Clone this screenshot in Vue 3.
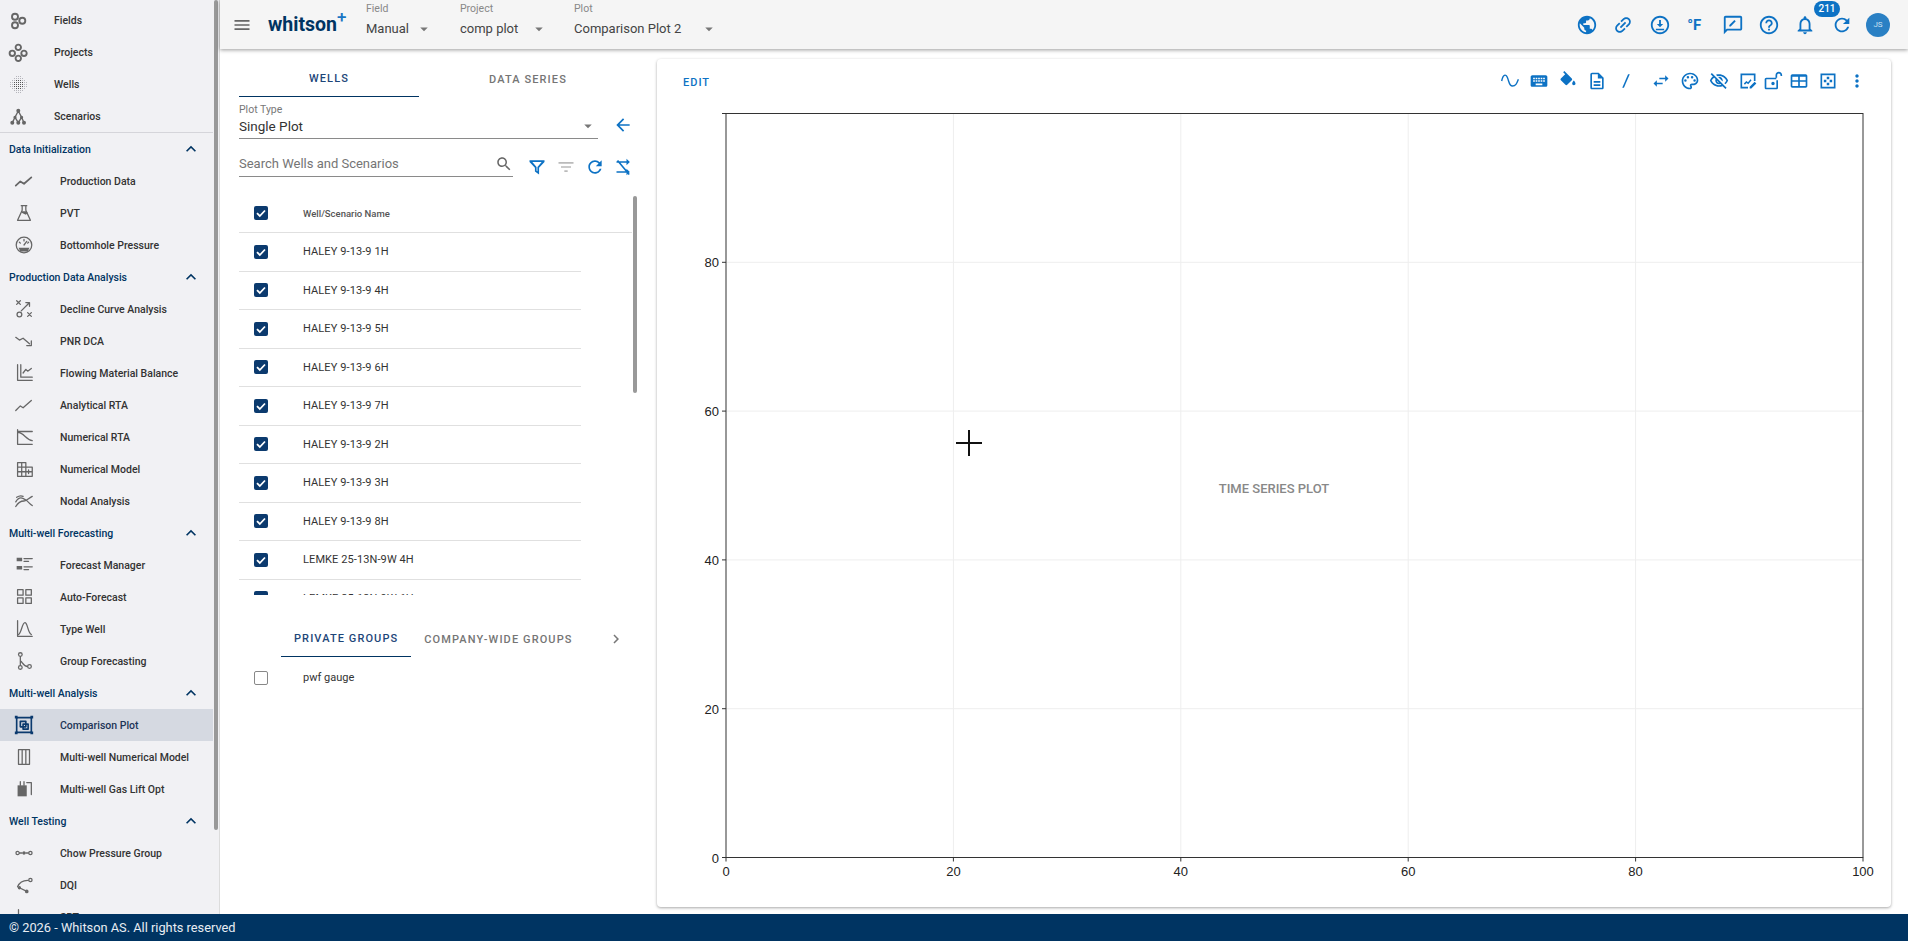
<script setup>
const c = (x, y, r) => `M${x - r} ${y}a${r} ${r} 0 1 0 ${2 * r} 0a${r} ${r} 0 1 0 ${-2 * r} 0`

// 1px squares on a 2px pitch, corners left out so the patch reads round
const dotGrid = (from, n, reach) => {
  const mid = (n - 1) / 2
  let d = ''
  for (let i = 0; i < n; i++) {
    for (let j = 0; j < n; j++) {
      if (Math.abs(i - mid) + Math.abs(j - mid) <= reach) d += `M${from + i * 2} ${from + j * 2}h1v1h-1z`
    }
  }
  return d
}

const navTop = [
  { label: 'Fields', d: c(9, 8.7, 3) + c(16.3, 12.7, 3) + c(9, 17.3, 3), bold: true },
  { label: 'Projects', d: c(12.3, 7.3, 2.7) + c(6.3, 13.3, 2.7) + c(18, 13.3, 2.7) + c(12.3, 18.3, 2.7), bold: true },
  { label: 'Wells', dots: dotGrid(4, 9, 5), core: dotGrid(8, 5, 3) },
  { label: 'Scenarios', d: 'M12.3 7L9 13.300L6.300 18.700M12.300 7L15.600 13.300L18 18.700M9 13.300L12.300 18.700M15.600 13.300L12.300 18.700', solid: c(12.3, 6.7, 2) + c(9, 13.3, 1.6) + c(15.6, 13.3, 1.6) + c(6.3, 18.7, 2) + c(12.3, 18.7, 2) + c(18, 18.7, 2) }
]

const sections = [
  {
    title: 'Data Initialization',
    items: [
      { label: 'Production Data', d: 'M3 17L8 12.500L12 15L20 8', bold: true },
      { label: 'PVT', d: 'M9 4h6M10 4v5L5 20h14L14 9V4', solid: 'M9 10h6l1 2-2 2-4-2z' },
      { label: 'Bottomhole Pressure', d: c(12, 12, 8.5) + 'M12 12l3-4M7 9l1 1M12 6v1.500M17 9l-1 1', solid: 'M6 15h12l-2 4H8z' }
    ]
  },
  {
    title: 'Production Data Analysis',
    items: [
      { label: 'Decline Curve Analysis', d: 'M4 3l4 4M8 3l-4 4M16 16l4 4M20 16l-4 4M9 14L17 6M14 5h4v4' + c(7, 18, 2.6) },
      { label: 'PNR DCA', d: 'M3 8L7 11L11 9L18 15M20 12v5h-5' },
      { label: 'Flowing Material Balance', d: 'M5 3v17h16M8.500 3v13.500H21M11 12l3-4l2 2l4-3' },
      { label: 'Analytical RTA', d: 'M3 18L8 13L11 15L20 7' },
      { label: 'Numerical RTA', d: 'M5 4v16h16M5 7c7 0 9 8 16 9M5 6h16' },
      { label: 'Numerical Model', d: 'M5 20V5h9v15zM5 10h9M5 15h9M9.500 5v15M14 10h7v10h-7M17 13v4M14 15h7' },
      { label: 'Nodal Analysis', d: 'M3 13c4-7 8-4 11-2s4 4 7 6M3 18c3-5 6-6 9-6s5-3 9-5M4 8c3-2 5-2 7-1' }
    ]
  },
  {
    title: 'Multi-well Forecasting',
    items: [
      { label: 'Forecast Manager', d: 'M12 5h9M12 8h5M12 14h9M12 17h5', solid: 'M4 4h6v4H4zM4 13h6v4H4z' },
      { label: 'Auto-Forecast', d: 'M5 4h6v6H5zM14 4h6v6h-6zM5 13h6v6H5zM14 13h6v6h-6z' },
      { label: 'Type Well', d: 'M5 3v17h16M6 18c3-1 4-13 7-13s3 11 7 13' },
      { label: 'Group Forecasting', d: c(8, 5, 2) + c(8, 19, 2) + c(18, 18, 2) + 'M8 7v10M8 12c2 0 3 6 8 6' }
    ]
  },
  {
    title: 'Multi-well Analysis',
    items: [
      { label: 'Comparison Plot', active: true, navy: true, d: 'M4 4h16v16H4zM8 8h6v6H8zM11 11h5.500v5.500H11z', solid: 'M2 2h3v3H2zM19 2h3v3h-3zM2 19h3v3H2zM19 19h3v3h-3z' },
      { label: 'Multi-well Numerical Model', d: 'M6 4h12v16H6zM10 4v16M14 4v16' },
      { label: 'Multi-well Gas Lift Opt', d: 'M8 8V4M12 8V4M15 5h5v13', solid: 'M5 8h10v12H5z' }
    ]
  },
  {
    title: 'Well Testing',
    items: [
      { label: 'Chow Pressure Group', d: c(5, 12, 1.8) + c(19, 12, 1.8) + 'M7 12h3M14 12h3', solid: c(12, 12, 1.8) },
      { label: 'DQI', d: 'M5 14c2-5 7-7 11-7' + c(19, 6.5, 1.8) + 'M7 15l8 4', solid: c(7, 15, 1.8) + c(15, 19, 2) },
      { label: 'SRT', d: 'M6 4v16h14' }
    ]
  }
]

const icons = {
  globe: 'M12 2C6.480 2 2 6.480 2 12s4.480 10 10 10 10-4.480 10-10S17.520 2 12 2zm-1 17.930c-3.950-.49-7-3.850-7-7.930 0-.62.08-1.210.21-1.790L9 15v1c0 1.100.9 2 2 2v1.930zm6.900-2.540c-.26-.81-1-1.390-1.900-1.390h-1v-3c0-.55-.45-1-1-1H8v-2h2c.55 0 1-.45 1-1V7h2c1.100 0 2-.9 2-2v-.41c2.930 1.190 5 4.060 5 7.410 0 2.080-.8 3.970-2.100 5.390z',
  link: 'M3.900 12c0-1.710 1.390-3.100 3.100-3.100h4V7H7c-2.760 0-5 2.240-5 5s2.240 5 5 5h4v-1.900H7c-1.710 0-3.100-1.390-3.100-3.100zM8 13h8v-2H8v2zm9-6h-4v1.900h4c1.710 0 3.100 1.390 3.100 3.100s-1.390 3.100-3.100 3.100h-4V17h4c2.760 0 5-2.240 5-5s-2.240-5-5-5z',
  download: 'M12 2C6.480 2 2 6.480 2 12s4.480 10 10 10 10-4.480 10-10S17.520 2 12 2zm0 18c-4.410 0-8-3.590-8-8s3.590-8 8-8 8 3.590 8 8-3.590 8-8 8zM11 6.500h2V11h2.500L12 14.500 8.500 11H11zM7.500 16h9v1.800h-9z',
  feedback: 'M20 2H4c-1.100 0-2 .9-2 2v18l4-4h14c1.100 0 2-.9 2-2V4c0-1.100-.9-2-2-2zm0 14H5.200L4 17.200V4h16v12zM8 13.500V12l5.500-5.500 1.500 1.500L9.500 13.500z',
  help: 'M11 18h2v-2h-2v2zm1-16C6.480 2 2 6.480 2 12s4.480 10 10 10 10-4.480 10-10S17.520 2 12 2zm0 18c-4.410 0-8-3.590-8-8s3.590-8 8-8 8 3.590 8 8-3.590 8-8 8zm0-14c-2.210 0-4 1.790-4 4h2c0-1.100.9-2 2-2s2 .9 2 2c0 2-3 1.750-3 5h2c0-2.250 3-2.500 3-5 0-2.210-1.790-4-4-4z',
  bell: 'M12 22c1.100 0 2-.9 2-2h-4c0 1.100.9 2 2 2zm6-6v-5c0-3.070-1.630-5.640-4.500-6.320V4c0-.83-.67-1.500-1.500-1.500s-1.500.67-1.500 1.500v.68C7.640 5.360 6 7.920 6 11v5l-2 2v1h16v-1l-2-2zm-2 1H8v-6c0-2.480 1.510-4.500 4-4.500s4 2.020 4 4.500v6z',
  refresh: 'M17.650 6.350C16.200 4.900 14.210 4 12 4c-4.420 0-7.990 3.580-7.990 8s3.570 8 7.990 8c3.730 0 6.840-2.550 7.730-6h-2.080c-.82 2.330-3.040 4-5.650 4-3.310 0-6-2.690-6-6s2.690-6 6-6c1.660 0 3.140.69 4.220 1.780L13 11h7V4l-2.350 2.350z',
  wave: 'M2 12c1.500-8 5-9 7-4s2 10 6 10s5-3 7-8',
  keyboard: 'M20 5H4c-1.100 0-1.990.9-1.990 2L2 17c0 1.100.9 2 2 2h16c1.100 0 2-.9 2-2V7c0-1.100-.9-2-2-2zm-9 3h2v2h-2V8zm0 3h2v2h-2v-2zM8 8h2v2H8V8zm0 3h2v2H8v-2zm-1 2H5v-2h2v2zm0-3H5V8h2v2zm9 7H8v-2h8v2zm0-4h-2v-2h2v2zm0-3h-2V8h2v2zm3 3h-2v-2h2v2zm0-3h-2V8h2v2z',
  fill: 'M16.560 8.940L7.620 0 6.210 1.410l2.380 2.380-5.150 5.150c-.59.59-.59 1.540 0 2.120l5.500 5.500c.29.29.68.44 1.060.44s.77-.15 1.060-.44l5.500-5.500c.59-.58.59-1.530 0-2.120zM19 11.500s-2 2.170-2 3.500c0 1.100.9 2 2 2s2-.9 2-2c0-1.330-2-3.500-2-3.500z',
  doc: 'M8 16h8v2H8zm0-4h8v2H8zm6-10H6c-1.100 0-2 .9-2 2v16c0 1.100.89 2 1.990 2H18c1.100 0 2-.9 2-2V8l-6-6zm4 18H6V4h7v5h5v11z',
  slash: 'M14.500 4h2L9.500 20h-2z',
  swap: 'M6.990 11L3 15l3.990 4v-3H14v-2H6.990v-3zM21 9l-3.990-4v3H10v2h7.010v3L21 9z',
  palette: 'M12 22C6.490 22 2 17.510 2 12S6.490 2 12 2s10 4.040 10 9c0 3.310-2.690 6-6 6h-1.770c-.28 0-.5.22-.5.5 0 .12.05.23.13.33.41.47.64 1.060.64 1.670 0 1.380-1.120 2.500-2.500 2.500zm0-18c-4.410 0-8 3.590-8 8s3.590 8 8 8c.28 0 .5-.22.5-.5 0-.16-.08-.28-.14-.35-.41-.46-.63-1.050-.63-1.650 0-1.380 1.120-2.500 2.500-2.500H16c2.210 0 4-1.790 4-4 0-3.860-3.590-7-8-7z' + c(6.5, 11.5, 1.5) + c(9.5, 7.5, 1.5) + c(14.5, 7.5, 1.5) + c(17.5, 11.5, 1.5),
  eyeOff: 'M12 6c3.790 0 7.170 2.130 8.820 5.500-.59 1.220-1.420 2.270-2.410 3.120l1.410 1.410c1.390-1.230 2.490-2.770 3.180-4.530C21.270 7.110 17 4 12 4c-1.270 0-2.490.2-3.640.57l1.650 1.650C10.660 6.090 11.320 6 12 6zm-1.070 1.140L13 9.210c.57.25 1.030.71 1.280 1.280l2.070 2.070c.08-.34.14-.7.14-1.070C16.500 9.010 14.480 7 12 7c-.37 0-.72.05-1.070.14zM2.010 3.870l2.680 2.680C3.060 7.830 1.770 9.530 1 11.500 2.730 15.890 7 19 12 19c1.520 0 2.980-.29 4.320-.82l3.420 3.420 1.410-1.410L3.420 2.450 2.010 3.870zm7.500 7.500l2.610 2.610c-.04.01-.08.02-.12.02-1.380 0-2.500-1.120-2.500-2.500 0-.05.01-.08.01-.13zm-3.400-3.400l1.750 1.750c-.23.55-.36 1.150-.36 1.780 0 2.480 2.020 4.500 4.500 4.500.63 0 1.230-.13 1.770-.36l.98.98c-.88.24-1.800.38-2.750.38-3.790 0-7.170-2.130-8.820-5.500.7-1.430 1.720-2.610 2.930-3.530z',
  sign: 'M3 3h18v9h-2V5H5v14h7v2H3zM7 15l3-3 2 1.500 3-3.500 1.300 1-4 5-2-1.500-2 2zM14 21v-2l6-6 2 2-6 6z',
  lock: 'M12 17c1.100 0 2-.9 2-2s-.9-2-2-2-2 .9-2 2 .9 2 2 2zM15 8V5c0-2.200 1.800-4 4-4s4 1.800 4 4v1h-2V5c0-1.100-.9-2-2-2s-2 .9-2 2v3zM4 8h12v2H4v10h12V11h2v9c0 1.100-.9 2-2 2H4c-1.100 0-2-.9-2-2V10c0-1.100.9-2 2-2z',
  table: 'M4 4h16c1.100 0 2 .9 2 2v12c0 1.100-.9 2-2 2H4c-1.100 0-2-.9-2-2V6c0-1.100.9-2 2-2zm0 3v4h7V7zm9 0v4h7V7zM4 13v5h7v-5zm9 0v5h7v-5z',
  dots: 'M3 3h18v18H3zm2 2v14h14V5zM10.500 7h3v3h-3zM10.500 14h3v3h-3zM7 10.500h3v3H7zM14 10.500h3v3h-3z',
  more: 'M12 8c1.100 0 2-.9 2-2s-.9-2-2-2-2 .9-2 2 .9 2 2 2zm0 2c-1.100 0-2 .9-2 2s.9 2 2 2 2-.9 2-2-.9-2-2-2zm0 6c-1.100 0-2 .9-2 2s.9 2 2 2 2-.9 2-2-.9-2-2-2z',
  menu: 'M3 18h18v-2H3v2zm0-5h18v-2H3v2zm0-7v2h18V6H3z',
  drop: 'M7 10l5 5 5-5z',
  back: 'M20 11H7.830l5.590-5.590L12 4l-8 8 8 8 1.410-1.410L7.830 13H20v-2z',
  search: 'M15.500 14h-.79l-.28-.27C15.410 12.590 16 11.110 16 9.500 16 5.910 13.090 3 9.500 3S3 5.910 3 9.500 5.910 16 9.500 16c1.610 0 3.090-.59 4.230-1.570l.27.28v.79l5 4.990L20.490 19l-4.990-5zm-6 0C7.010 14 5 11.990 5 9.500S7.010 5 9.500 5 14 7.010 14 9.500 11.990 14 9.500 14z',
  filter: 'M3 4h18v2l-6.500 6.800V21l-5-3.500v-4.700L3 6zm3.400 2l5.100 5.900v4.600l1 .7v-5.300L17.600 6z',
  filterList: 'M10 18h4v-2h-4v2zM3 6v2h18V6H3zm3 7h12v-2H6v2z',
  shuffle: 'M3 5h12V2l4 4-4 4V7H3zM3 17h12v-3l4 4-4 4v-3H3zM5 3.500l14 17-1.500 1.200-14-17z',
  less: 'M12 8l-6 6 1.410 1.410L12 10.830l4.590 4.580L18 14z',
  right: 'M10 6L8.590 7.410 13.170 12l-4.580 4.590L10 18l6-6z'
}

const topIcons = [
  { d: icons.globe },
  { d: icons.link, tilt: true },
  { d: icons.download },
  { text: '°F' },
  { d: icons.feedback },
  { d: icons.help },
  { d: icons.bell },
  { d: icons.refresh }
]

const plotTools = [
  { d: icons.wave, line: true }, { d: icons.keyboard }, { d: icons.fill }, { d: icons.doc },
  { d: icons.slash }, { d: icons.swap, gap: true }, { d: icons.palette }, { d: icons.eyeOff },
  { d: icons.sign }, { d: icons.lock, tight: true }, { d: icons.table }, { d: icons.dots }, { d: icons.more }
]

const pickers = [
  { label: 'Field', value: 'Manual', width: 94, inner: 67 },
  { label: 'Project', value: 'comp plot', width: 114, inner: 88 },
  { label: 'Plot', value: 'Comparison Plot 2', width: 150, inner: 144 }
]

const wells = ['HALEY 9-13-9 1H', 'HALEY 9-13-9 4H', 'HALEY 9-13-9 5H', 'HALEY 9-13-9 6H', 'HALEY 9-13-9 7H', 'HALEY 9-13-9 2H', 'HALEY 9-13-9 3H', 'HALEY 9-13-9 8H', 'LEMKE 25-13N-9W 4H', 'LEMKE 25-13N-9W 6H']

// chart scale, in px inside the svg
const ticks = [0, 20, 40, 60, 80, 100]
const px = (v) => 69 + v * 11.37
const py = (v) => 752.5 - v * 7.44
</script>

<template>
  <div class="page">
    <div class="body">
      <aside class="sidebar">
        <div class="nav-scroll">
          <div class="nav-top">
            <div v-for="item in navTop" :key="item.label" class="nav-row top">
              <svg class="nav-icon" viewBox="0 0 24 24">
                <path v-if="item.d" :d="item.d" :class="{ bold: item.bold }" />
                <path v-if="item.solid" :d="item.solid" class="solid" />
                <path v-if="item.dots" :d="item.dots" class="dots" />
                <path v-if="item.core" :d="item.core" class="core" />
              </svg>
              <span>{{ item.label }}</span>
            </div>
          </div>
          <template v-for="sec in sections" :key="sec.title">
            <div class="sec-title">
              <span>{{ sec.title }}</span>
              <svg class="chev" viewBox="0 0 24 24"><path :d="icons.less" /></svg>
            </div>
            <div v-for="item in sec.items" :key="item.label" class="nav-row" :class="{ active: item.active }">
              <svg class="nav-icon" viewBox="0 0 24 24" :class="{ navy: item.navy }">
                <path :d="item.d" :class="{ bold: item.bold }" />
                <path v-if="item.solid" :d="item.solid" class="solid" />
              </svg>
              <span>{{ item.label }}</span>
            </div>
          </template>
        </div>
        <div class="side-thumb"></div>
      </aside>

      <div class="right">
        <header class="topbar">
          <svg class="menu" viewBox="0 0 24 24"><path :d="icons.menu" /></svg>
          <div class="logo">whitson<sup>+</sup></div>
          <div v-for="p in pickers" :key="p.label" class="picker" :style="{ width: p.width + 'px' }">
            <div class="picker-label">{{ p.label }}</div>
            <div class="picker-value" :style="{ width: p.inner + 'px' }">
              <span>{{ p.value }}</span>
              <svg viewBox="0 0 24 24"><path :d="icons.drop" /></svg>
            </div>
          </div>
          <div class="top-actions">
            <div v-for="(ic, i) in topIcons" :key="i" class="top-btn">
              <span v-if="ic.text" class="deg">{{ ic.text }}</span>
              <svg v-else viewBox="0 0 24 24" :class="{ tilt: ic.tilt }"><path :d="ic.d" /></svg>
            </div>
            <div class="avatar">JS</div>
            <div class="badge">211</div>
          </div>
        </header>

        <div class="content">
          <section class="panel">
            <div class="tabs">
              <div class="tab on">WELLS</div>
              <div class="tab second">DATA SERIES</div>
            </div>

            <div class="select-row">
              <div class="select">
                <div class="select-label">Plot Type</div>
                <div class="select-value">
                  <span>Single Plot</span>
                  <svg viewBox="0 0 24 24"><path :d="icons.drop" /></svg>
                </div>
              </div>
              <svg class="blue-icon back" viewBox="0 0 24 24"><path :d="icons.back" /></svg>
            </div>

            <div class="search-row">
              <div class="search">
                <span>Search Wells and Scenarios</span>
                <svg viewBox="0 0 24 24"><path :d="icons.search" /></svg>
              </div>
              <svg class="blue-icon" viewBox="0 0 24 24"><path :d="icons.filter" /></svg>
              <svg class="blue-icon dim" viewBox="0 0 24 24"><path :d="icons.filterList" /></svg>
              <svg class="blue-icon" viewBox="0 0 24 24"><path :d="icons.refresh" /></svg>
              <svg class="blue-icon" viewBox="0 0 24 24"><path :d="icons.shuffle" /></svg>
            </div>

            <div class="list">
              <div class="list-head">
                <span class="check"><svg viewBox="0 0 14 14"><path d="M3 7.200l2.800 2.800L11 4.500" /></svg></span>
                <span class="head-text">Well/Scenario Name</span>
              </div>
              <div v-for="w in wells" :key="w" class="well-row">
                <span class="check"><svg viewBox="0 0 14 14"><path d="M3 7.200l2.800 2.800L11 4.500" /></svg></span>
                <span>{{ w }}</span>
              </div>
              <div class="list-thumb"></div>
            </div>

            <div class="group-tabs">
              <div class="group-tab on">PRIVATE GROUPS</div>
              <div class="group-tab">COMPANY-WIDE GROUPS</div>
              <svg viewBox="0 0 24 24"><path :d="icons.right" /></svg>
            </div>
            <div class="group-row">
              <span class="check empty"></span>
              <span>pwf gauge</span>
            </div>
          </section>

          <section class="card">
            <div class="card-bar">
              <span class="edit">EDIT</span>
              <div class="tools">
                <div v-for="(t, i) in plotTools" :key="i" class="tool" :class="{ gap: t.gap, tight: t.tight }">
                  <svg viewBox="0 0 24 24" :class="{ line: t.line }"><path :d="t.d" /></svg>
                </div>
              </div>
            </div>
            <svg class="chart" width="1234" height="802">
              <g class="grid">
                <line v-for="t in ticks.slice(1, 5)" :key="'x' + t" :x1="px(t)" :x2="px(t)" :y1="py(100)" :y2="py(0)" />
                <line v-for="t in ticks.slice(1, 5)" :key="'y' + t" :x1="px(0)" :x2="px(100)" :y1="py(t)" :y2="py(t)" />
              </g>
              <rect class="frame" :x="px(0)" :y="py(100)" :width="px(100) - px(0)" :height="py(0) - py(100)" />
              <g class="tick-marks">
                <line v-for="t in ticks" :key="'mx' + t" :x1="px(t)" :x2="px(t)" :y1="py(0)" :y2="py(0) + 4" />
                <line v-for="t in ticks" :key="'my' + t" :x1="px(0) - 4" :x2="px(0)" :y1="py(t)" :y2="py(t)" />
              </g>
              <g class="tick-text">
                <text v-for="t in ticks" :key="'tx' + t" :x="px(t)" :y="py(0) + 18" text-anchor="middle">{{ t }}</text>
                <text v-for="t in ticks.slice(0, 5)" :key="'ty' + t" :x="px(0) - 7" :y="py(t) + 5" text-anchor="end">{{ t }}</text>
              </g>
              <text class="chart-title" x="617" y="388" text-anchor="middle">TIME SERIES PLOT</text>
              <path class="cursor" d="M312 325v26M299 338h26" />
            </svg>
          </section>
        </div>
      </div>
    </div>
    <footer class="footer">© 2026 - Whitson AS. All rights reserved</footer>
  </div>
</template>

<style>
html, body { margin: 0; background: #fff; overflow: hidden; }
</style>

<style scoped>
.page {
  width: 1908px;
  height: 941px;
  display: flex;
  flex-direction: column;
  overflow: hidden;
  font-family: Roboto, "Liberation Sans", sans-serif;
  color: #333;
}
.body { flex: 1; display: flex; min-height: 0; }

/* sidebar */
.sidebar {
  position: relative;
  width: 220px;
  flex-shrink: 0;
  box-sizing: border-box;
  background: #f1f1f4;
  border-right: 1px solid #dcdcdc;
  overflow: hidden;
}
.nav-scroll { width: 213px; padding-top: 4px; }
.nav-top { border-bottom: 1px solid #d5d5da; }
.nav-row {
  height: 32px;
  display: flex;
  align-items: center;
  font-size: 10.5px;
  font-weight: 500;
  color: #333;
  padding-left: 13px;
  box-sizing: border-box;
}
.nav-row.top { padding-left: 6px; }
.nav-row.active { background: #d5d9e1; color: #1d3557; }
.nav-icon { width: 22px; height: 22px; margin-right: 25px; flex-shrink: 0; fill: none; stroke: #666; stroke-width: 1.400; stroke-linecap: round; stroke-linejoin: round; }
.nav-row.top .nav-icon { width: 24px; height: 24px; margin-right: 24px; }
.nav-icon .bold { stroke-width: 1.900; }
.nav-icon .solid { fill: #666; stroke: none; }
.nav-icon .dots { stroke: none; fill: #b5b5bb; shape-rendering: crispEdges; }
.nav-icon .core { stroke: none; fill: #555; shape-rendering: crispEdges; }
.nav-icon.navy { stroke: #0b3a6e; stroke-width: 1.800; }
.nav-icon.navy .solid { fill: #0b3a6e; }
.sec-title {
  height: 32px;
  display: flex;
  align-items: center;
  justify-content: space-between;
  padding: 0 12px 0 9px;
  font-size: 10.5px;
  font-weight: 500;
  color: #003462;
}
.chev { width: 20px; height: 20px; fill: #003462; }
.side-thumb {
  position: absolute;
  left: 214px;
  top: 0;
  width: 4px;
  height: 830px;
  background: #999;
  border-radius: 2px;
}

/* top bar */
.right { flex: 1; min-width: 0; display: flex; flex-direction: column; }
.topbar {
  height: 49px;
  flex-shrink: 0;
  display: flex;
  align-items: center;
  background: #f5f5f5;
  box-shadow: 0 1px 4px rgba(0, 0, 0, .4);
  position: relative;
  z-index: 2;
  padding-left: 12px;
}
.menu { width: 20px; height: 20px; fill: #666; }
.logo {
  margin-left: 16px;
  width: 98px;
  font-size: 19.5px;
  font-weight: 700;
  color: #003462;
  line-height: 1;
}
.logo sup { color: #1976c4; font-size: 17px; font-weight: 500; line-height: 0; vertical-align: 8px; }
.picker { display: flex; flex-direction: column; margin-top: -8px; flex-shrink: 0; }
.picker-label { font-size: 10.5px; color: #888; height: 16px; line-height: 16px; }
.picker-value { display: flex; align-items: center; justify-content: space-between; font-size: 13px; color: #444; height: 24px; }
.picker-value svg { width: 18px; height: 18px; fill: #777; }
.top-actions { margin-left: auto; display: flex; align-items: center; position: relative; padding-right: 18px; }
.top-btn { width: 36.4px; height: 24px; display: flex; align-items: center; justify-content: center; }
.top-btn svg { width: 22px; height: 22px; fill: #0d72c4; }
.top-btn svg.tilt { transform: rotate(-45deg); }
.deg { font-size: 15px; font-weight: 700; color: #0d72c4; margin-right: 4px; }
.avatar {
  width: 24px;
  height: 24px;
  border-radius: 50%;
  margin-left: 6px;
  background: #2a80c4;
  color: #cfe2f3;
  font-size: 8px;
  display: flex;
  align-items: center;
  justify-content: center;
}
.badge {
  position: absolute;
  right: 68px;
  top: -12px;
  width: 26px;
  height: 16px;
  border-radius: 8px;
  background: #0d72c4;
  color: #fff;
  font-size: 10px;
  font-weight: 500;
  text-align: center;
  line-height: 16px;
}

/* left panel */
.content { flex: 1; min-height: 0; display: flex; }
.panel { width: 437px; flex-shrink: 0; box-sizing: border-box; padding-left: 19px; }
.tabs { display: flex; height: 48px; width: 398px; }
.tab {
  display: flex;
  align-items: center;
  justify-content: center;
  width: 180px;
  padding-top: 12px;
  font-size: 11px;
  font-weight: 500;
  letter-spacing: 1.100px;
  color: #757575;
  box-sizing: border-box;
}
.tab.on { color: #1d4679; border-bottom: 1px solid #003462; }
.tab.second { flex: 1; }
.select-row { display: flex; align-items: flex-end; margin-top: 6px; }
.select { width: 359px; border-bottom: 1px solid #8a8a8a; height: 36px; box-sizing: border-box; }
.select-label { font-size: 10.5px; color: #777; height: 13px; line-height: 13px; }
.select-value { display: flex; align-items: center; justify-content: space-between; height: 18px; margin-top: 1px; font-size: 13.500px; color: #333; }
.select-value svg { width: 18px; height: 18px; fill: #777; margin-right: 1px; }
.blue-icon { width: 20px; height: 20px; fill: #0d72c4; flex-shrink: 0; }
.back { margin: 0 0 4px 15px; }
.search-row { display: flex; align-items: center; margin-top: 14px; }
.search {
  width: 274px;
  height: 24px;
  flex-shrink: 0;
  box-sizing: border-box;
  padding-bottom: 2px;
  border-bottom: 1px solid #8a8a8a;
  display: flex;
  align-items: center;
  justify-content: space-between;
  font-size: 13px;
  color: #757575;
  margin-right: 14px;
}
.search svg { width: 18px; height: 18px; fill: #666; }
.search-row .blue-icon { margin-top: 3px; margin-right: 9px; }
.search-row .dim { fill: #bbb; }
.list { position: relative; height: 401px; width: 398px; margin-top: 17px; overflow: hidden; }
.list-head {
  height: 38px;
  display: flex;
  align-items: center;
  width: 393px;
  border-bottom: 1px solid #e0e0e0;
  font-size: 9.500px;
  font-weight: 500;
  color: #555;
}
.check {
  width: 14px;
  height: 14px;
  margin: 0 35px 0 15px;
  flex-shrink: 0;
  border-radius: 2px;
  background: #0b3a6e;
  display: block;
}
.check svg { display: block; fill: none; stroke: #fff; stroke-width: 1.800; }
.check.empty { background: #fff; border: 1.500px solid #888; box-sizing: border-box; }
.well-row {
  height: 38.500px;
  display: flex;
  align-items: center;
  width: 342px;
  box-sizing: border-box;
  border-bottom: 1px solid #e0e0e0;
  font-size: 11px;
  letter-spacing: .1px;
  color: #333;
}
.list-thumb {
  position: absolute;
  left: 394px;
  top: 2px;
  width: 4px;
  height: 197px;
  border-radius: 2px;
  background: #999;
}
.group-tabs { display: flex; align-items: center; height: 36px; margin-top: 26px; padding-left: 42px; }
.group-tab {
  height: 36px;
  display: flex;
  align-items: center;
  justify-content: center;
  padding: 0 13px;
  box-sizing: border-box;
  font-size: 11px;
  font-weight: 500;
  letter-spacing: 1.100px;
  color: #757575;
}
.group-tab.on { color: #1d4679; border-bottom: 1px solid #003462; }
.group-tabs svg { width: 18px; height: 18px; fill: #777; margin-left: 21px; }
.group-row { height: 39px; padding-top: 2px; box-sizing: border-box; display: flex; align-items: center; font-size: 11px; color: #333; }

/* plot card */
.card {
  width: 1234px;
  height: 848px;
  margin-top: 10px;
  background: #fff;
  border-radius: 4px;
  box-shadow: 0 1px 3px rgba(0, 0, 0, .35);
  flex-shrink: 0;
  display: flex;
  flex-direction: column;
}
.card-bar { height: 46px; flex-shrink: 0; display: flex; align-items: center; justify-content: space-between; padding: 0 20px 0 26px; }
.edit { font-size: 11px; font-weight: 500; letter-spacing: 1px; color: #0d72c4; }
.tools { display: flex; align-items: center; margin-top: -3px; }
.tool { width: 29px; height: 22px; display: flex; align-items: center; justify-content: center; }
.tool.gap { margin-left: 6px; }
.tool.tight { width: 22px; }
.tool svg { width: 20px; height: 20px; fill: #0d72c4; flex-shrink: 0; }
.tool svg.line { fill: none; stroke: #0d72c4; stroke-width: 1.700; }
.chart { display: block; }
.grid line { stroke: #eee; stroke-width: 1; }
.frame { fill: none; stroke: #333; stroke-width: 1; }
.tick-marks line { stroke: #333; stroke-width: 1; }
.tick-text text { font-size: 13px; fill: #222; font-family: "Liberation Sans", sans-serif; }
.chart-title { font-size: 13px; fill: #888; font-weight: 500; font-family: Roboto, sans-serif; }
.cursor { stroke: #111; stroke-width: 2; fill: none; }

.footer {
  height: 27px;
  flex-shrink: 0;
  background: #003462;
  color: #e8edf3;
  font-size: 12.800px;
  line-height: 27px;
  padding-left: 9px;
}
</style>
